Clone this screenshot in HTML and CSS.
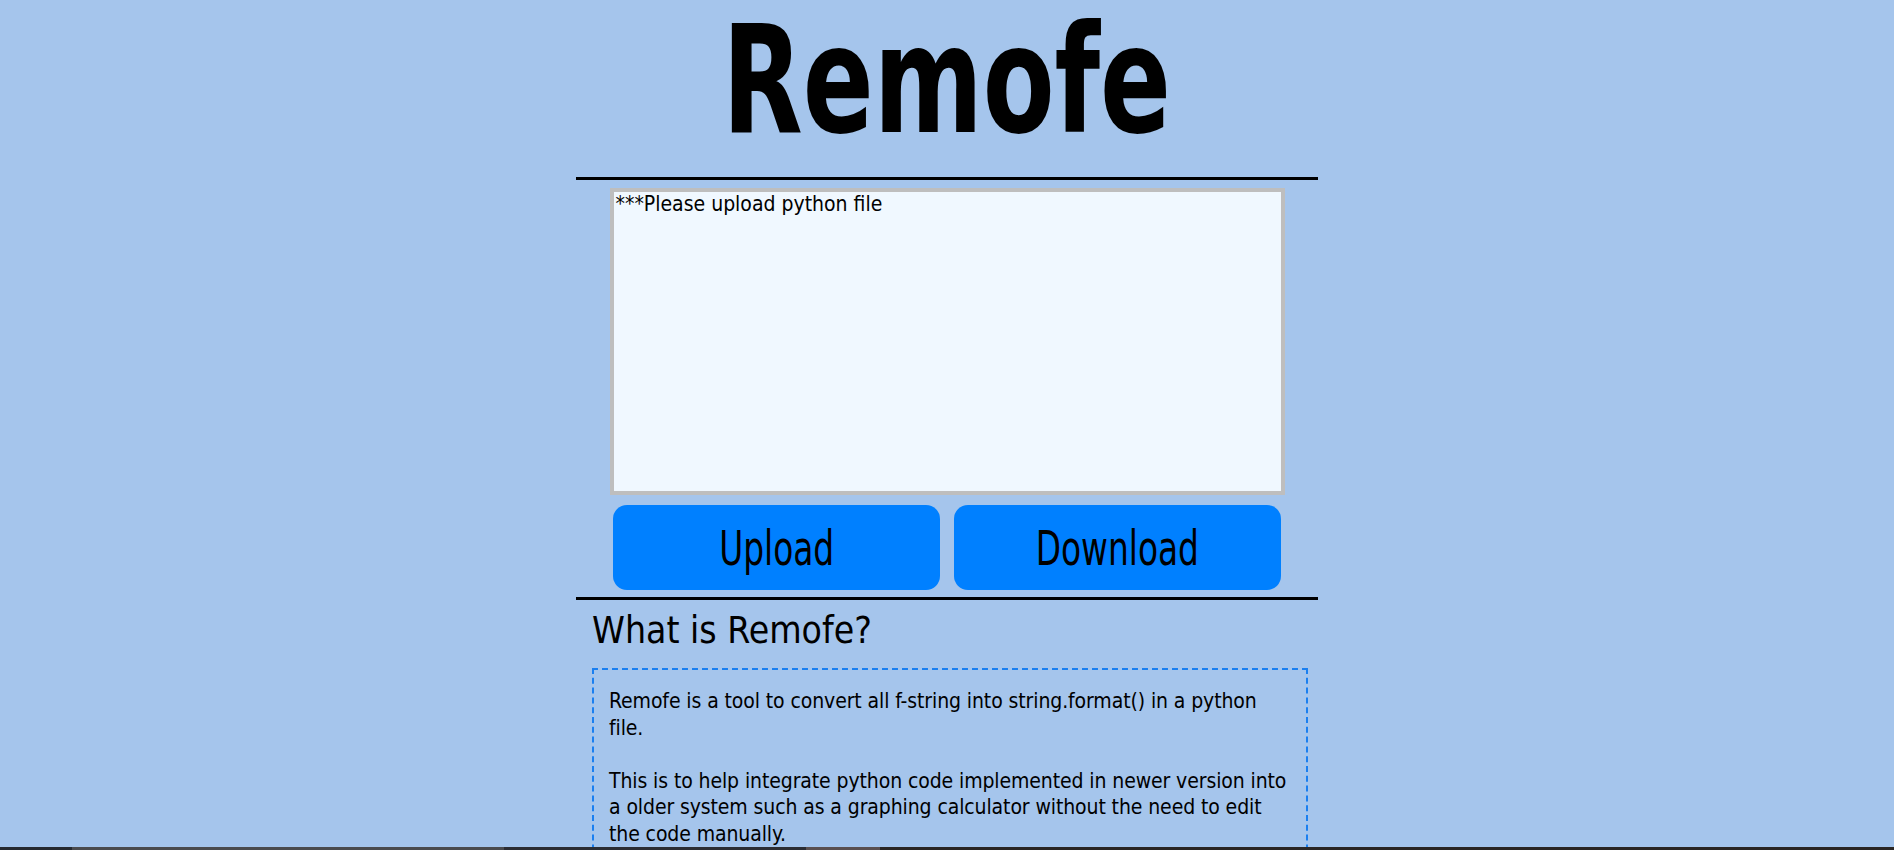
FILE: index.html
```html
<!DOCTYPE html>
<html lang="en">
<head>
<meta charset="utf-8">
<title>Remofe</title>
<link rel="stylesheet" href="styles.css">
</head>
<body>
<header class="masthead">
  <h1 class="title"><span class="narrow title-text">Remofe</span></h1>
</header>
<main class="panel">
  <hr class="rule">
  <div class="editor">
    <textarea class="code-box" spellcheck="false">***Please upload python file</textarea>
    <div class="actions">
      <button class="btn"><span class="narrow btn-text">Upload</span></button>
      <button class="btn"><span class="narrow btn-text">Download</span></button>
    </div>
  </div>
  <hr class="rule">
  <section class="about">
    <h2 class="about-title">What is Remofe?</h2>
    <div class="about-box">
      <p class="about-text">Remofe is a tool to convert all f-string into string.format() in a python<br>file.<br><br>This is to help integrate python code implemented in newer version into<br>a older system such as a graphing calculator without the need to edit<br>the code manually.</p>
    </div>
  </section>
</main>
<div class="taskbar">
  <span class="tb tb-a"></span>
  <span class="tb tb-b"></span>
  <span class="tb tb-c"></span>
  <span class="tb tb-d"></span>
  <span class="tb tb-e"></span>
</div>
</body>
</html>
```

FILE: styles.css
```css
html, body {
  margin: 0;
  padding: 0;
}
body {
  background: #a5c5ec;
  font-family: "DejaVu Sans Condensed", "Liberation Sans Narrow", "Liberation Sans", sans-serif;
  color: #000;
  overflow: hidden;
  height: 850px;
}
.narrow {
  display: inline-block;
}
.masthead {
  height: 177px;
  display: flex;
  justify-content: center;
  align-items: flex-start;
}
.title {
  margin: 0;
  width: 620px;
  text-align: center;
  font-size: 150px;
  line-height: 150px;
  font-weight: bold;
  padding-top: 5px;
}
.title-text {
  transform: scaleX(0.775);
}
.panel {
  width: 742px;
  margin: 0 auto;
}
.rule {
  margin: 0;
  border: 0;
  border-top: 3px solid #000;
  height: 0;
}
.editor {
  padding: 8px 0 7px;
  display: flex;
  flex-direction: column;
  align-items: center;
}
.code-box {
  box-sizing: border-box;
  width: 675px;
  height: 307px;
  margin: 0;
  border: 4px solid #bebebe;
  background: #f0f8ff;
  font-family: inherit;
  font-size: 21px;
  line-height: 1.2;
  padding: 0 2px;
  resize: none;
  color: #000;
  outline: none;
  display: block;
}
.actions {
  margin-top: 10px;
  display: flex;
  gap: 14px;
}
.btn {
  width: 327px;
  height: 85px;
  border: 0;
  border-radius: 14px;
  background: #0080ff;
  color: #000;
  font-family: inherit;
  font-size: 48px;
  padding: 0;
  cursor: pointer;
}
.btn-text {
  transform: scaleX(0.76);
}
.about {
  padding: 8px 10px 0 16px;
}
.about-title {
  margin: 0 0 14px;
  font-size: 37px;
  font-weight: normal;
  line-height: 46px;
}
.about-box {
  border: 2px dashed #1a7ff0;
  padding: 18px 6px 20px 15px;
}
.about-text {
  margin: 0;
  font-size: 21px;
  line-height: 26.6px;
  letter-spacing: -0.1px;
}
.taskbar {
  position: fixed;
  left: 0;
  right: 0;
  bottom: 0;
  height: 3px;
  display: flex;
  background: #23262b;
}
.tb { display: block; height: 3px; }
.tb-a { width: 72px; background: #262a30; }
.tb-b { width: 432px; background: #4a4b4e; }
.tb-c { width: 302px; background: #2b2d33; }
.tb-d { width: 74px; background: #5a5050; }
.tb-e { flex: 1; background: #2a2624; }
```
